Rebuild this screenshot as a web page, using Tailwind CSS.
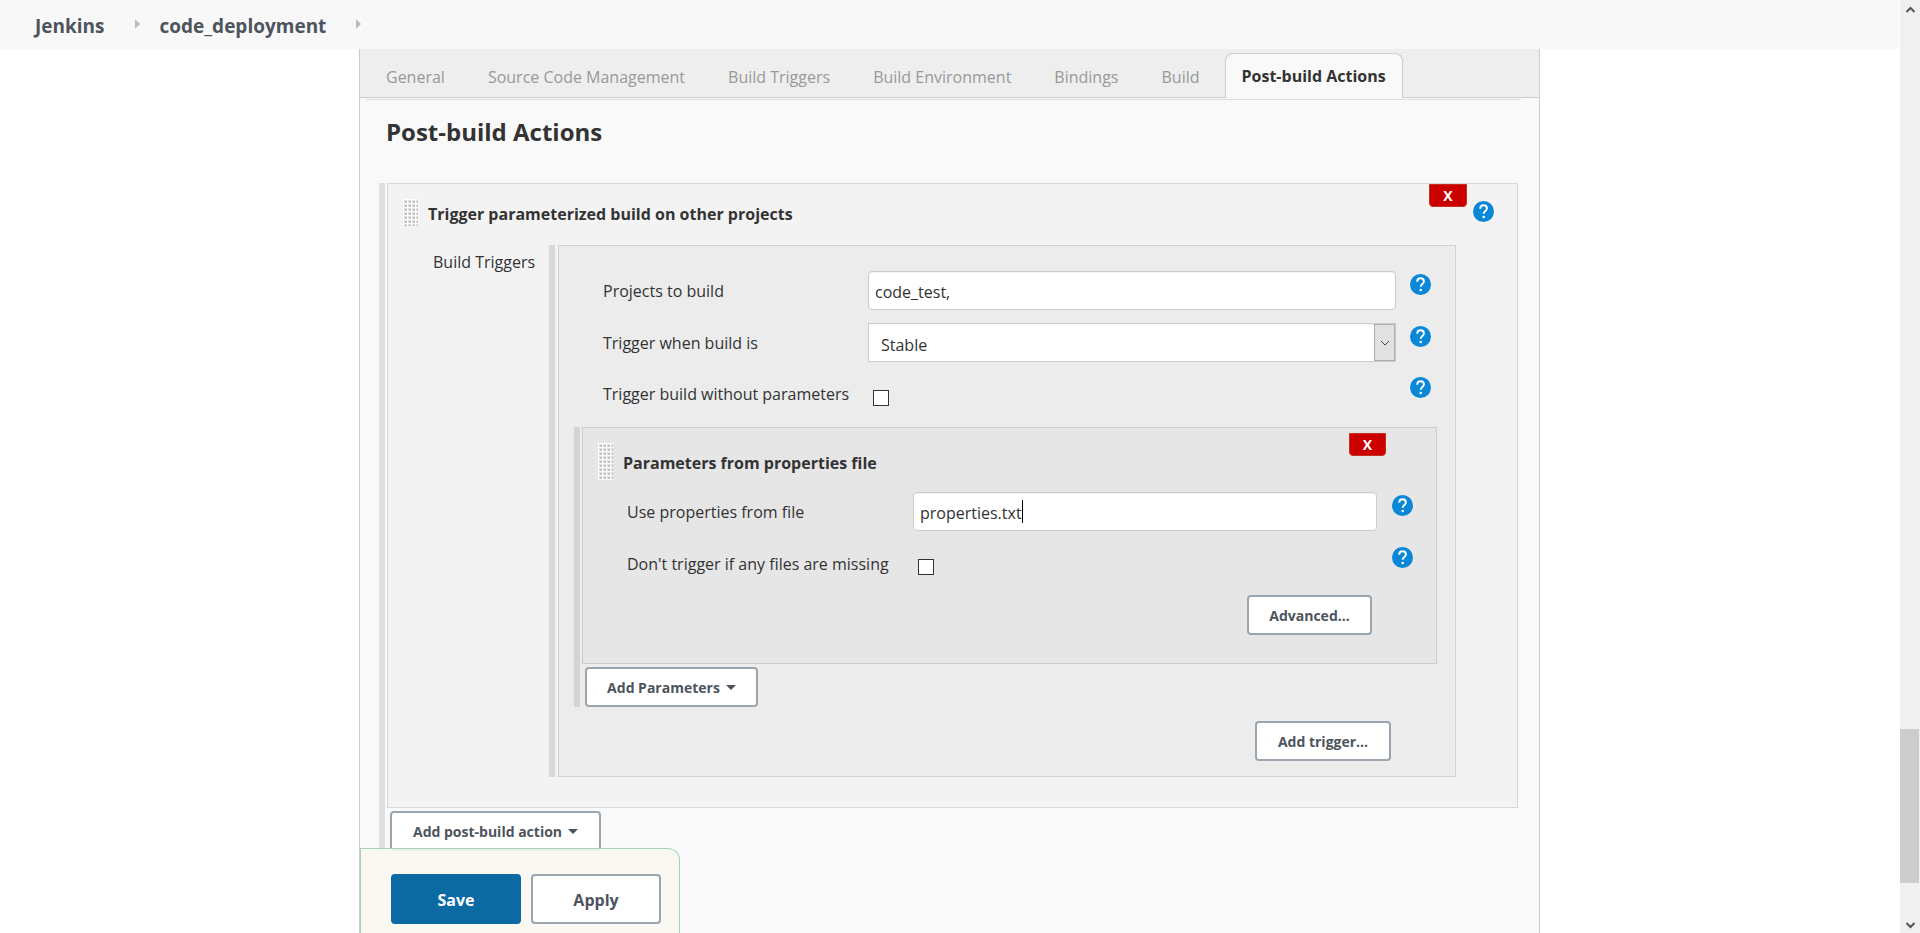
<!DOCTYPE html>
<html lang="en">
<head>
<meta charset="utf-8">
<title>code_deployment Config [Jenkins]</title>
<script src="https://cdn.jsdelivr.net/npm/@tailwindcss/browser@4"></script>
</head>
<body class="relative flex h-screen overflow-hidden bg-white font-['Open_Sans','Noto_Sans',sans-serif] text-base leading-6 text-[#333]">
<svg class="absolute size-0" aria-hidden="true">
  <symbol id="help" viewBox="0 0 21 21"><circle cx="10.5" cy="10.5" r="10.5" fill="#0a87d6"/><path d="M7.200 7.700C7.200 5.600 8.600 4.300 10.600 4.300s3.300 1.300 3.300 3.100c0 2.300-3.200 2.800-3.200 5.300" fill="none" stroke="#fff" stroke-width="1.900"/><circle cx="10.700" cy="16" r="1.300" fill="#fff"/></symbol>
  <pattern id="dots" width="4" height="4" patternUnits="userSpaceOnUse"><path d="M1 1h3v3H1z" fill="#dededa"/><path d="M2 2h2v2H2z" fill="#c4c4c0"/><path d="M3 2h1v1H3z" fill="#b4b4b0"/></pattern>
</svg>
<div class="relative flex min-w-0 flex-1 flex-col">
  <header class="h-[49px] shrink-0 bg-[#f8f8f8]">
    <nav aria-label="Breadcrumb" class="flex items-center pt-3 pl-[35px] text-[19px] leading-7 font-bold text-[#4d545d]">
      <a href="#">Jenkins</a>
      <svg class="mr-5 ml-[30px] h-2.5 w-[5px] -translate-y-0.5" viewBox="0 0 5 10"><path d="M0 0l5 5-5 5z" fill="#bbb"/></svg>
      <a href="#">code_deployment</a>
      <svg class="ml-[30px] h-2.5 w-[5px] -translate-y-0.5" viewBox="0 0 5 10"><path d="M0 0l5 5-5 5z" fill="#bbb"/></svg>
    </nav>
  </header>
  <main class="mx-auto flex min-h-0 w-full max-w-[1181px] flex-1 flex-col border-x border-[#ccc] bg-[#f9f9f9]">
    <div role="tablist" class="flex h-[49px] shrink-0 items-end gap-[43px] border-b border-[#ccc] bg-[#eee] pl-[26px] text-[#999]">
      <button role="tab" class="pb-2">General</button>
      <button role="tab" class="pb-2">Source Code Management</button>
      <button role="tab" class="pb-2">Build Triggers</button>
      <button role="tab" class="pb-2">Build Environment</button>
      <button role="tab" class="pb-2">Bindings</button>
      <button role="tab" class="pb-2">Build</button>
      <button role="tab" aria-selected="true" class="-mb-px -ml-[18px] h-[45px] rounded-t-lg border border-b-0 border-[#ccc] bg-[#f9f9f9] px-4 font-bold text-[#333]">Post-build Actions</button>
    </div>
    <div class="mt-px mr-[18px] ml-1.5 border-t border-[#ddd]"></div>
    <h2 class="mt-4 pl-[26px] text-2xl leading-8 font-bold">Post-build Actions</h2>

    <section class="mt-[35px] mr-[21px] ml-[19px] flex gap-0.5">
      <div class="w-1.5 shrink-0 bg-[#e0e0e0]"></div>
      <div class="min-w-0 flex-1">
        <div class="relative border border-[#d8d8d8] bg-[#f3f3f3] pt-[15px] pb-[30px]">
          <button aria-label="Delete" class="absolute top-0 right-[50px] h-[23px] w-[38px] rounded-b border border-[#c4301c] bg-[#c00] text-sm leading-5 font-bold text-white">X</button>
          <div class="flex h-[46px] items-start pr-[23px] pl-[15px]">
            <svg class="h-[27px] w-[15px] bg-white"><rect width="16" height="27" fill="url(#dots)"/></svg>
            <h3 class="mt-[3px] ml-2.5 flex-1 font-bold">Trigger parameterized build on other projects</h3>
            <button aria-label="Help" class="mt-0.5"><svg class="size-[21px]"><use href="#help"/></svg></button>
          </div>
          <div class="flex pr-[61px] pl-[45px]">
            <div class="w-[116px] shrink-0 pt-[5px]">Build Triggers</div>
            <div class="flex min-w-0 flex-1 gap-[3px]">
              <div class="w-1.5 shrink-0 bg-[#d9d9d9]"></div>
              <div class="min-w-0 flex-1 border border-[#d2d2d2] bg-[#ececec] pt-[25px] pb-[15px]">
                <div class="flex h-[52px] items-start pr-6 pl-11">
                  <label for="projects" class="w-[265px] shrink-0 pt-2">Projects to build</label>
                  <input id="projects" type="text" value="code_test," class="h-[39px] min-w-0 flex-1 rounded border border-[#ccc] bg-white px-1.5 pt-0.5 inset-shadow-xs">
                  <button aria-label="Help" class="mt-[3px] ml-3.5"><svg class="size-[21px]"><use href="#help"/></svg></button>
                </div>
                <div class="flex h-[52px] items-start pr-6 pl-11">
                  <label for="when" class="w-[265px] shrink-0 pt-2">Trigger when build is</label>
                  <div class="relative h-[39px] min-w-0 flex-1">
                    <select id="when" class="h-full w-full appearance-none border border-[#ccc] bg-white px-3 pt-1 inset-shadow-xs"><option>Stable</option></select>
                    <div class="pointer-events-none absolute inset-y-px right-px flex w-[21px] items-center justify-center border border-[#adadad] bg-[#e1e1e1]"><svg class="h-1.5 w-2.5" viewBox="0 0 10 6"><path d="M1 1l4 4 4-4" fill="none" stroke="#444"/></svg></div>
                  </div>
                  <button aria-label="Help" class="mt-[3px] ml-3.5"><svg class="size-[21px]"><use href="#help"/></svg></button>
                </div>
                <div class="flex h-[52px] items-start pr-6 pl-11">
                  <label for="without" class="w-[270px] shrink-0 pt-[7px]">Trigger build without parameters</label>
                  <input id="without" type="checkbox" class="mt-[15px] size-4 appearance-none border border-[#333] bg-white">
                  <button aria-label="Help" class="mt-0.5 ml-auto"><svg class="size-[21px]"><use href="#help"/></svg></button>
                </div>
                <div class="mr-[18px] ml-[15px] flex gap-0.5">
                  <div class="w-1.5 shrink-0 bg-[#d4d4d4]"></div>
                  <div class="min-w-0 flex-1">
                    <div class="relative border border-[#ccc] bg-[#e6e6e6] pt-[15px] pb-7">
                      <button aria-label="Delete" class="absolute top-[5px] right-[50px] h-[23px] w-[37px] rounded-b border border-[#c4301c] bg-[#c00] text-sm leading-5 font-bold text-white">X</button>
                      <div class="flex h-[49px] items-start pl-[15px]">
                        <svg class="h-[37px] w-[15px] bg-white"><rect width="16" height="37" fill="url(#dots)"/></svg>
                        <h4 class="mt-2 ml-2.5 font-bold">Parameters from properties file</h4>
                      </div>
                      <div class="flex h-[52px] items-start pr-[23px] pl-11">
                        <label for="file" class="w-[286px] shrink-0 pt-2">Use properties from file</label>
                        <div class="flex h-[39px] min-w-0 flex-1 items-center rounded border border-[#ccc] bg-white inset-shadow-xs">
                          <input id="file" type="text" value="properties.txt" class="field-sizing-content pt-0.5 pl-1.5 outline-none">
                          <span class="h-[23px] w-px bg-black"></span>
                        </div>
                        <button aria-label="Help" class="mt-[3px] ml-[15px]"><svg class="size-[21px]"><use href="#help"/></svg></button>
                      </div>
                      <div class="flex h-[51px] items-start pr-[23px] pl-11">
                        <label for="missing" class="w-[291px] shrink-0 pt-2">Don't trigger if any files are missing</label>
                        <input id="missing" type="checkbox" class="mt-[15px] size-4 appearance-none border border-[#333] bg-white">
                        <button aria-label="Help" class="mt-[3px] ml-auto"><svg class="size-[21px]"><use href="#help"/></svg></button>
                      </div>
                      <div class="flex justify-end pr-16">
                        <button class="h-10 w-[125px] rounded border-2 border-[#9aa5af] bg-white pt-0.5 text-sm font-bold text-[#4d545d]">Advanced...</button>
                      </div>
                    </div>
                    <button class="mt-[3px] ml-[3px] flex h-10 w-[173px] items-center justify-center gap-1.5 rounded border-2 border-[#9aa5af] bg-white pt-0.5 text-sm font-bold text-[#4d545d]">Add Parameters<svg class="mb-0.5 h-[5px] w-2.5" viewBox="0 0 10 5"><path d="M0 0h10L5 5z" fill="#4d545d"/></svg></button>
                  </div>
                </div>
                <div class="mt-3.5 flex justify-end pr-16">
                  <button class="h-10 w-[136px] rounded border-2 border-[#9aa5af] bg-white pt-0.5 text-sm font-bold text-[#4d545d]">Add trigger...</button>
                </div>
              </div>
            </div>
          </div>
        </div>
        <button class="mt-[3px] ml-[3px] flex h-10 w-[211px] items-center justify-center gap-1.5 rounded border-2 border-[#9aa5af] bg-white pt-0.5 text-sm font-bold text-[#4d545d]">Add post-build action<svg class="mb-0.5 h-[5px] w-2.5" viewBox="0 0 10 5"><path d="M0 0h10L5 5z" fill="#4d545d"/></svg></button>
      </div>
    </section>
  </main>
  <div class="pointer-events-none absolute inset-x-0 bottom-0 mx-auto w-full max-w-[1179px]">
    <div class="pointer-events-auto flex h-[85px] w-80 gap-2.5 rounded-tr-xl border border-b-0 border-[#a9cfbd] bg-[#f8f8f0]/90 pt-[25px] pl-[30px] font-bold">
      <button class="h-[50px] w-[130px] rounded bg-[#0b6aa2] pt-0.5 text-white">Save</button>
      <button class="h-[50px] w-[130px] rounded border-2 border-[#9aa5af] bg-white pt-0.5 text-[#4d545d]">Apply</button>
    </div>
  </div>
</div>
<div aria-hidden="true" class="flex w-[21px] shrink-0 flex-col items-center border-l border-white bg-[#f0f0f0] pb-1">
  <svg class="mt-1.5 h-[7px] w-[9px]" viewBox="0 0 9 7"><path d="M.5 6l4-4 4 4" fill="none" stroke="#555" stroke-width="2"/></svg>
  <div class="flex-[716]"></div>
  <div class="mr-px w-[19px] flex-[154] bg-[#cdcdcd]"></div>
  <div class="flex-[39]"></div>
  <svg class="h-[7px] w-[9px]" viewBox="0 0 9 7"><path d="M.5 1l4 4 4-4" fill="none" stroke="#555" stroke-width="2"/></svg>
</div>
</body>
</html>
